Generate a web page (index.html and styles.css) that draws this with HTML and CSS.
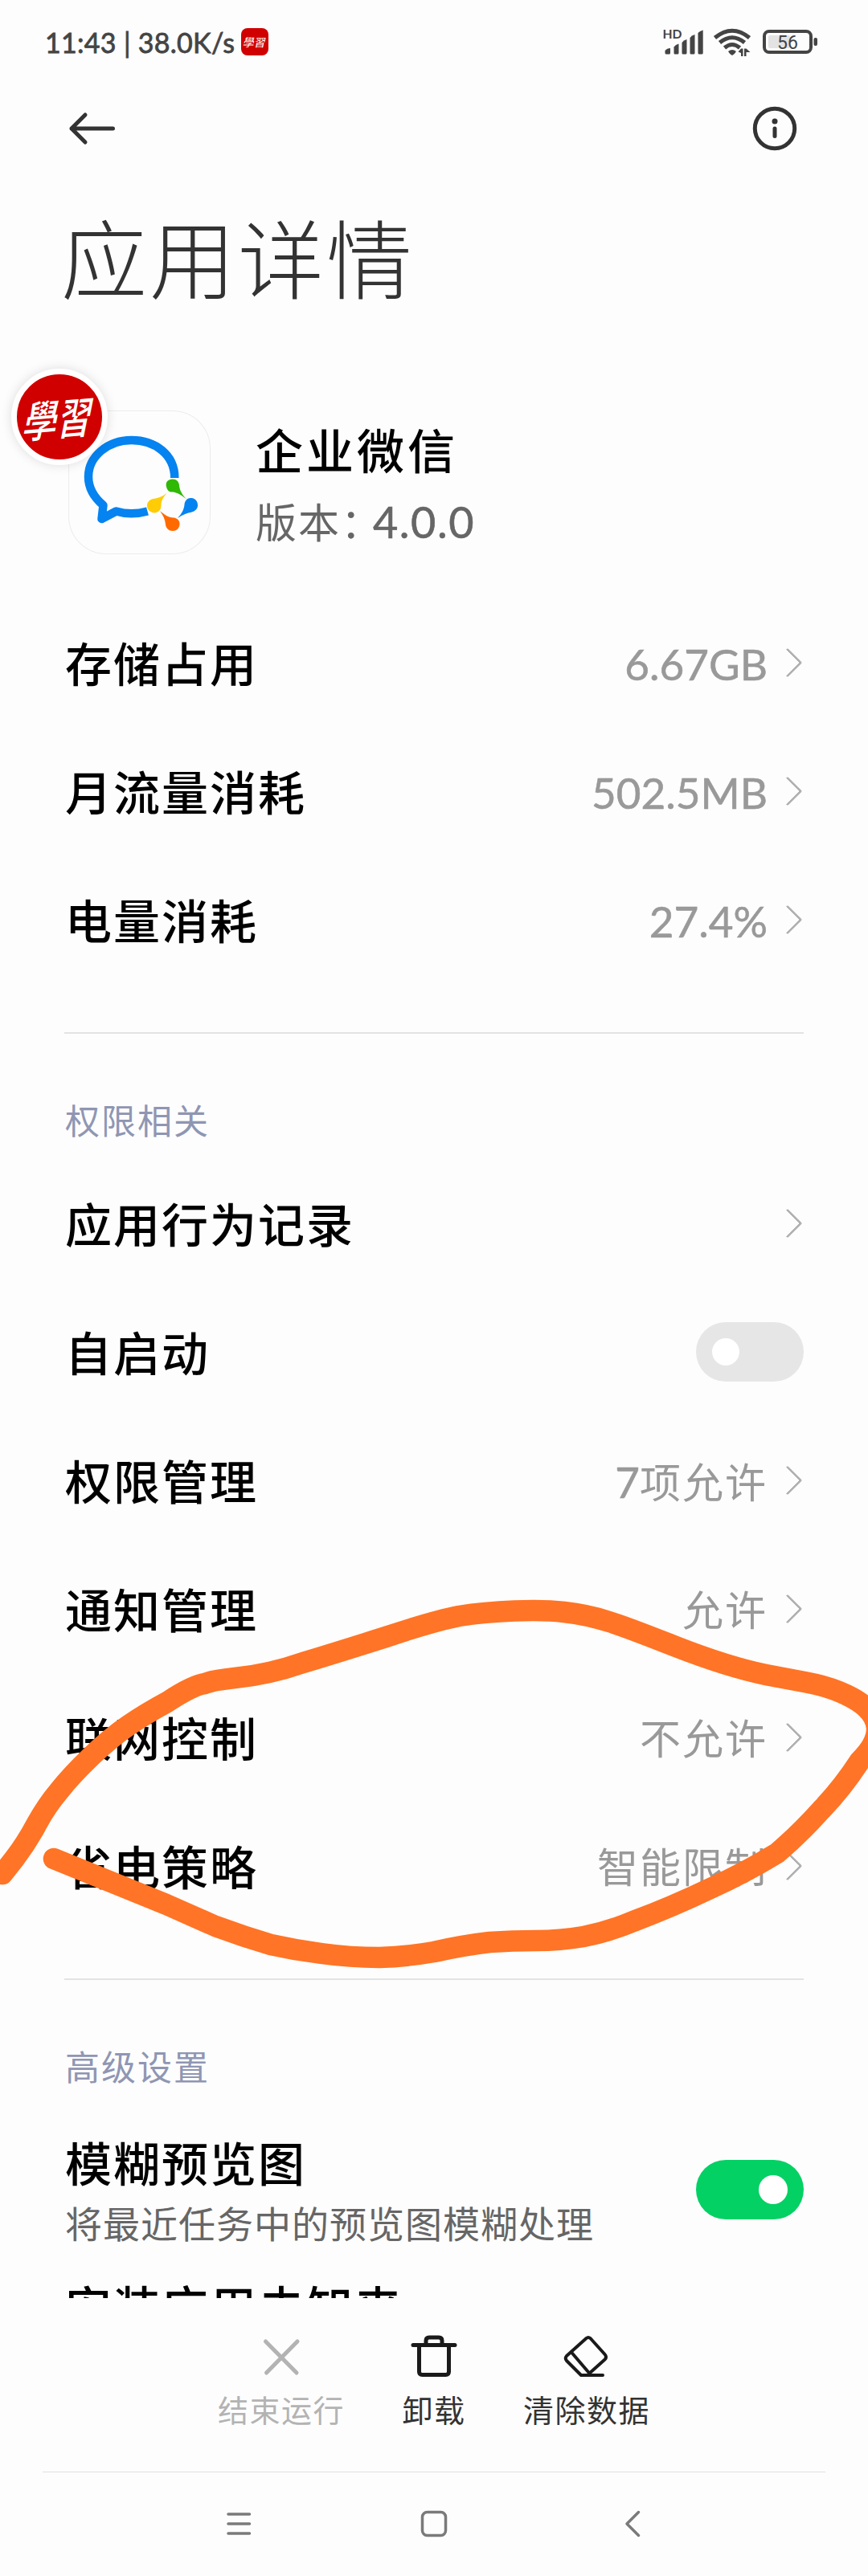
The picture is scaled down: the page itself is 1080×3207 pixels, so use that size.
FILE: index.html
```html
<!DOCTYPE html>
<html lang="zh-CN">
<head>
<meta charset="utf-8">
<title>应用详情</title>
<link rel="stylesheet" href="styles.css">
</head>
<body>
<div class="screen">
  <header class="status-bar">
    <div class="status-left">
      <span class="status-text">11:43 | 38.0K/s</span>
      <span class="mini-badge"><span class="mini-script">學習</span></span>
    </div>
    <svg class="status-icons" width="196" height="40" viewBox="824 33 196 40">
      <text class="hd" x="824.5" y="48" textLength="24" lengthAdjust="spacingAndGlyphs">HD</text>
      <g class="ink">
        <path d="M827.5 66V63Q830 60 834 60V66Q834 67.500 832.500 67.500H829Q827.500 67.500 827.500 66Z"/>
        <path d="M838.500 66V58.500Q840.500 55.500 844.500 54.500V66Q844.500 67.500 843 67.500H840Q838.500 67.500 838.500 66Z"/>
        <path d="M848.500 66V53Q850.500 50 854.500 49V66Q854.500 67.500 853 67.500H850Q848.500 67.500 848.500 66Z"/>
        <path d="M858.500 66V47Q860.500 44 864.500 43V66Q864.500 67.500 863 67.500H860Q858.500 67.500 858.500 66Z"/>
        <path d="M868.500 66V41Q870.500 38.500 874.700 37.500V66Q874.700 67.500 873 67.500H870Q868.500 67.500 868.500 66Z"/>
        <path d="M906 64Q911 60 916 64Q914.500 67 911 69Q907.500 67 906 64Z"/>
        <path d="M918.500 64.500L922 60.500H924.500V70H922V66Z"/>
        <path d="M926 60.500H928.500L933.500 65H928.500V70H926Z"/>
      </g>
      <g class="wifi">
        <path d="M889.500 47Q911 29.500 932.500 47"/>
        <path d="M895.500 53Q911 40.500 926.500 53"/>
        <path d="M901.500 59.500Q911 51.500 920.500 59.500"/>
      </g>
      <rect x="956" y="44" width="27" height="16" rx="2" fill="#e3e3e3"/>
      <rect class="outline" x="951" y="39" width="58" height="26" rx="6"/>
      <rect class="ink" x="1012.500" y="47" width="4.500" height="10" rx="2"/>
      <text class="battery-level" x="980" y="61" text-anchor="middle">56</text>
    </svg>
  </header>

  <nav class="top-nav">
    <svg class="back" width="60" height="44" viewBox="0 0 60 44"><path d="M22 5L5 22L22 39M5 22H56.500"/></svg>
    <svg class="info" width="56" height="56" viewBox="0 0 56 56"><circle cx="28" cy="28" r="24.700"/><path d="M28 28V37.500"/><circle class="dot" cx="28" cy="19" r="3.500"/></svg>
  </nav>

  <h1 class="title">应用详情</h1>

  <section class="app">
    <div class="app-icon">
      <svg width="175" height="177" viewBox="86 512 175 177">
        <path fill="none" stroke="#0583f0" stroke-width="10.500" stroke-linejoin="round" d="M217.300 595C217.300 566 193 548 163.500 548C134 548 110 568.500 110 593.500C110 607 116 618.500 128.500 629L126.500 646L144.500 636.500C156 640 171 640 183.500 636.500"/>
        <path fill="#2fb805" d="M207 606C205.500 600 209.500 596.500 214.500 596.500C220 596.500 222.500 600 223 604C223.500 611 227 616 232 621.500C224 615 219 612.500 213.500 612.500C210 612.500 208 610 207 606Z"/>
        <path fill="#0583f0" d="M238 620C243.500 620.500 246.500 625 246 630C245.500 634.500 241.500 637 237 638C230 639.500 226 642 221 645C226.500 639 229 634 229.500 628C230 623 233.500 619.500 238 620Z"/>
        <path fill="#ff6a00" d="M199 636C205 641 209 644 216 644.500C221 645 224 648.500 223.500 653C223 658 219.500 661 215 661C210 661 206.500 657.500 206 653C205.500 646.500 203 642 199 636Z"/>
        <path fill="#ffcc05" d="M208 613.500C203 619 200.500 623 200.500 629.500C200.500 635 196.500 638.500 192 638.500C187 638 183 634.500 183 629.500C183 625 186.500 621.500 191 621C198 620 202.500 618 208 613.500Z"/>
      </svg>
      <span class="clone-badge"><span class="badge-script">學習</span></span>
    </div>
    <div class="app-text">
      <div class="app-name">企业微信</div>
      <div class="app-version">版本：<span class="latin">4.0.0</span></div>
    </div>
  </section>

  <main class="content">
    <ul class="rows">
      <li class="row"><span class="label">存储占用</span><span class="value latin">6.67GB</span><i class="chevron"></i></li>
      <li class="row"><span class="label">月流量消耗</span><span class="value latin">502.5MB</span><i class="chevron"></i></li>
      <li class="row"><span class="label">电量消耗</span><span class="value latin">27.4%</span><i class="chevron"></i></li>
    </ul>
    <h2 class="section">权限相关</h2>
    <ul class="rows">
      <li class="row"><span class="label">应用行为记录</span><i class="chevron"></i></li>
      <li class="row"><span class="label">自启动</span><span class="toggle"></span></li>
      <li class="row"><span class="label">权限管理</span><span class="value"><span class="latin">7</span>项允许</span><i class="chevron"></i></li>
      <li class="row"><span class="label">通知管理</span><span class="value">允许</span><i class="chevron"></i></li>
      <li class="row"><span class="label">联网控制</span><span class="value">不允许</span><i class="chevron"></i></li>
      <li class="row"><span class="label">省电策略</span><span class="value">智能限制</span><i class="chevron"></i></li>
    </ul>
    <h2 class="section">高级设置</h2>
    <div class="row preview">
      <div class="stack">
        <span class="label">模糊预览图</span>
        <span class="hint">将最近任务中的预览图模糊处理</span>
      </div>
      <span class="toggle on"></span>
    </div>
    <div class="cut-row"><span class="label">安装应用未知来</span></div>
  </main>

  <footer class="actions">
    <div class="action disabled">
      <svg width="60" height="56" viewBox="320 2906 60 56"><path d="M330.500 2915L369 2954M370 2915L331.500 2954"/></svg>
      <span>结束运行</span>
    </div>
    <div class="action">
      <svg width="60" height="56" viewBox="510 2906 60 56"><path d="M514 2919.500H566M530 2919V2914Q530 2910 534 2910H546Q550 2910 550 2914V2919M521.500 2920V2952.500Q521.500 2956.500 525.500 2956.500H554.500Q558.500 2956.500 558.500 2952.500V2920"/></svg>
      <span>卸载</span>
    </div>
    <div class="action">
      <svg class="thin" width="60" height="56" viewBox="700 2906 60 56"><path d="M750 2957H723L705 2939Q702.500 2936 705 2933L729.500 2911Q732 2909 734.500 2911L752.500 2931Q755.500 2934.500 752.500 2937.500L733 2955M711 2928.500L734.500 2956"/></svg>
      <span>清除数据</span>
    </div>
  </footer>

  <nav class="system-nav">
    <svg width="34" height="36" viewBox="280 3124 34 36"><path d="M284 3130H310.500M284 3142H310.500M284 3154H310.500"/></svg>
    <svg width="36" height="36" viewBox="522 3124 36 36"><rect x="525.500" y="3127.500" width="29" height="29" rx="6"/></svg>
    <svg width="34" height="36" viewBox="766 3124 34 36"><path d="M794.500 3127.500L780 3142L794.500 3156.500"/></svg>
  </nav>

  <svg class="scribble" width="1080" height="480" viewBox="0 1980 1080 480">
    <path d="M3 2333L18 2314Q34 2293 46 2270Q58 2248 74 2229Q89 2210 114 2186Q138 2163 160 2148Q182 2133 208 2119Q240 2098 255 2096Q264 2092 292 2089Q334 2085 377 2070Q420 2057 480 2038Q540 2018 571 2012Q602 2007 640 2005.500Q678 2004 702 2007Q730 2010 758 2019Q778 2025 841 2050Q905 2075 953 2085L1001 2094Q1030 2099 1053 2110Q1089 2127 1091 2151Q1092 2170 1070 2192Q1048 2226 1022 2253Q995 2283 967 2307Q926 2332 884 2351Q836 2374 788 2392Q757 2405 726 2411Q697 2416 667 2416Q638 2416 609 2418Q575 2422 540 2430Q506 2436 472 2437Q436 2437 400 2432Q368 2428 337 2421Q303 2411 268 2398L207 2371L67 2314"/>
  </svg>
</div>
</body>
</html>
```
FILE: styles.css
```css
* { box-sizing: border-box; }
body { margin: 0; background: #fdfdfd; font-family: Lato, "Noto Sans CJK SC", sans-serif; color: #000; }
h1, h2, ul { margin: 0; padding: 0; font-weight: 400; list-style: none; }
svg { display: block; flex: none; }

.screen { position: relative; display: flex; flex-direction: column; width: 1080px; height: 3207px; overflow: hidden; }

.status-bar { display: flex; align-items: center; justify-content: space-between; height: 106px; padding: 0 60px 0 56px; }
.status-left { display: flex; align-items: center; gap: 8px; }
.status-text { font-size: 34px; line-height: 40px; color: #444; -webkit-text-stroke: 0.8px #444; letter-spacing: 0.3px; white-space: pre; }
.mini-badge { display: flex; align-items: center; justify-content: center; width: 34px; height: 34px; margin-top: -2px; border-radius: 8px; background: #d00000; color: #fff; }
.mini-script { font: 400 14px/1 "Noto Sans CJK TC", sans-serif; transform: skewX(-12deg); }
.ink { fill: #444; }
.outline { fill: none; stroke: #444; stroke-width: 4; }
.wifi path { fill: none; stroke: #444; stroke-width: 5; }
.hd { font: 700 16px Lato, sans-serif; fill: #444; }
.battery-level { font: 400 23px Roboto, sans-serif; fill: #444; }

.top-nav { display: flex; align-items: center; justify-content: space-between; height: 108px; padding: 0 88px 0 84px; }
.top-nav svg { fill: none; stroke: #333; stroke-width: 5; stroke-linecap: round; stroke-linejoin: round; }
.top-nav .dot { fill: #333; stroke: none; }

.title { height: 214px; padding-left: 76px; font-size: 107px; line-height: 218px; font-weight: 300; letter-spacing: 3px; color: #333; }

.app { display: flex; height: 319px; padding: 84px 0 0 86px; }
.app-icon { position: relative; width: 175px; height: 177px; border-radius: 46px; box-shadow: 0 0 0 1px #ececec; }
.clone-badge { position: absolute; left: -72px; top: -53px; display: flex; align-items: center; justify-content: center; width: 120px; height: 120px; border: 7px solid #fff; border-radius: 50%; background: #d00000; color: #fff; box-shadow: 0 0 14px rgba(0, 0, 0, .13); }
.badge-script { font: 500 42px/1 "Noto Sans CJK TC", sans-serif; transform: skewX(-16deg) rotate(-5deg) scaleY(1.3); }
.app-text { margin-left: 57px; }
.app-name { height: 68px; margin-top: 16px; font-size: 59px; line-height: 68px; font-weight: 500; letter-spacing: 4px; }
.app-version { height: 68px; margin-top: 20px; font-size: 51px; line-height: 68px; letter-spacing: 2px; color: #666; }
.app-version .latin { margin-left: -13px; }

.content { height: 2114px; overflow: hidden; }
.row { display: flex; align-items: center; height: 160px; padding: 0 80px 0 81px; }
.label { flex: 1; font-size: 58px; line-height: 80px; font-weight: 500; letter-spacing: 2px; white-space: nowrap; }
.value { font-size: 51px; line-height: 80px; letter-spacing: 2px; color: #999; }
.value.latin, .value .latin { font-size: 53px; letter-spacing: 0; -webkit-text-stroke: 0.6px #999; }
.app-version .latin { font-size: 54px; letter-spacing: 1.5px; -webkit-text-stroke: 0.6px #666; }
.chevron { width: 26px; height: 26px; margin: 0 3px 0 16px; border: solid #b0b0b0; border-width: 3px 3px 0 0; border-radius: 2px; transform: translate(-4px, -2px) rotate(45deg); }
.section { height: 160px; margin: 58px 80px 0; border-top: 2px solid #e3e3e3; font-size: 43px; line-height: 218px; text-indent: 1px; letter-spacing: 2px; color: #8f96b3; }
.toggle { flex: none; display: flex; align-items: center; width: 134px; height: 74px; padding: 0 20px; border-radius: 37px; background: #e6e6e6; transform: translateY(-2px); }
.toggle::before { content: ""; width: 34px; height: 34px; border-radius: 50%; background: #fff; }
.toggle.on { justify-content: flex-end; background: #03d164; transform: none; }
.toggle.on::before { width: 36px; height: 36px; }
.preview { height: 206px; }
.stack { display: flex; flex: 1; flex-direction: column; padding-top: 4px; }
.stack .label { flex: none; }
.hint { margin-top: 2px; font-size: 46px; line-height: 66px; letter-spacing: 1px; color: #666; }
.cut-row { height: 94px; padding: 4px 0 0 81px; }

.actions { display: flex; justify-content: center; height: 217px; margin: 0 53px; padding-top: 45px; border-bottom: 1px solid #e0e0e0; }
.action { display: flex; flex-direction: column; align-items: center; width: 190px; font-size: 38px; line-height: 60px; letter-spacing: 1.5px; color: #333; gap: 8px; }
.action svg { fill: none; stroke: #1a1a1a; stroke-width: 5; stroke-linecap: round; stroke-linejoin: round; }
.action svg.thin { stroke-width: 4; }
.disabled { color: #b3b3b3; }
.disabled svg { stroke: #b3b3b3; }

.system-nav { display: flex; justify-content: space-between; padding: 46px 280px 0; }
.system-nav svg { fill: none; stroke: #7a7a7a; stroke-width: 3.500; stroke-linecap: round; stroke-linejoin: round; }

.scribble { position: absolute; left: 0; top: 1980px; pointer-events: none; }
.scribble path { fill: none; stroke: #ff7426; stroke-width: 26.500; stroke-linecap: round; stroke-linejoin: round; }
```
